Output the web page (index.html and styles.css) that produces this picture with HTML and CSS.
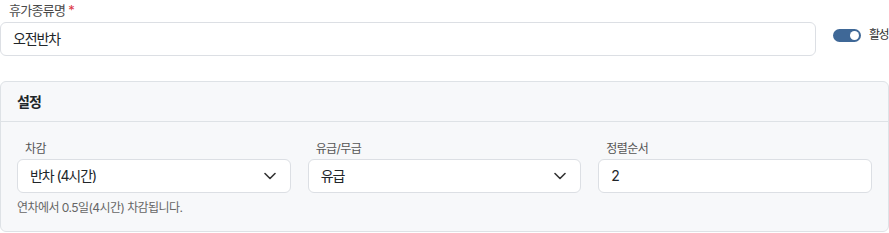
FILE: index.html
```html
<!DOCTYPE html>
<html lang="ko">
<head>
<meta charset="utf-8">
<link rel="stylesheet" href="styles.css">
</head>
<body>
<div class="page">
  <div class="name-row">
    <div class="name-field">
      <label class="label">휴가종류명 <span class="req">*</span></label>
      <div class="input">오전반차</div>
    </div>
    <div class="toggle-group">
      <span class="toggle"><span class="knob"></span></span>
      <span class="toggle-label">활성</span>
    </div>
  </div>

  <section class="card">
    <header class="card-header">설정</header>
    <div class="card-body">
      <div class="grid">
        <div class="field">
          <label class="label small">차감</label>
          <div class="input select"><span>반차 (4시간)</span>
            <svg class="chev" width="12" height="8" viewBox="0 0 12 8"><path d="M1 1.5 L6 6.5 L11 1.5" fill="none" stroke="#333" stroke-width="1.6" stroke-linecap="round" stroke-linejoin="round"/></svg>
          </div>
          <div class="help">연차에서 0.5일(4시간) 차감됩니다.</div>
        </div>
        <div class="field">
          <label class="label small">유급/무급</label>
          <div class="input select"><span>유급</span>
            <svg class="chev" width="12" height="8" viewBox="0 0 12 8"><path d="M1 1.5 L6 6.5 L11 1.5" fill="none" stroke="#333" stroke-width="1.6" stroke-linecap="round" stroke-linejoin="round"/></svg>
          </div>
        </div>
        <div class="field">
          <label class="label small">정렬순서</label>
          <div class="input">2</div>
        </div>
      </div>
    </div>
  </section>
</div>
</body>
</html>
```
FILE: styles.css
```css
* { box-sizing: border-box; }
html, body { margin: 0; padding: 0; background: #fff; }
body {
  font-family: "Inter", "Noto Sans CJK KR", sans-serif;
  color: #212529;
  width: 889px;
}
.name-row { display: flex; align-items: flex-start; }
.name-field { flex: 1; }
.label {
  display: block;
  font-size: 13px;
  line-height: 20px;
  color: #4a4a4a;
  padding-left: 9px;
  margin-bottom: 2px;
  letter-spacing: -0.7px;
}
.label.small {
  font-size: 12px;
  line-height: 18px;
  padding-left: 8px;
  margin-bottom: 1px;
  color: #555;
  letter-spacing: -0.6px;
}
.req { color: #dc3545; }
.input {
  height: 34px;
  border: 1px solid #dcdfe4;
  border-radius: 6px;
  background: #fff;
  font-size: 14px;
  line-height: 32px;
  padding: 0 12px;
  color: #212529;
  letter-spacing: -1.1px;
}
.select {
  display: flex;
  align-items: center;
  justify-content: space-between;
  padding-right: 14px;
}
.chev { display: block; }
.toggle-group {
  display: flex;
  align-items: center;
  margin-left: 17px;
  margin-top: 28px;
  gap: 8px;
}
.toggle {
  width: 28px;
  height: 13px;
  border-radius: 7px;
  background: #3f6897;
  position: relative;
  display: block;
}
.knob {
  position: absolute;
  right: 2px;
  top: 2px;
  width: 9px;
  height: 9px;
  border-radius: 50%;
  background: #fff;
}
.toggle-label {
  font-size: 12px;
  line-height: 14px;
  color: #333;
  letter-spacing: -1.5px;
  width: 20px;
  white-space: nowrap;
}
.card {
  margin-top: 25px;
  border: 1px solid #dee2e6;
  border-radius: 6px;
  background: #f7f8fa;
}
.card-header {
  height: 40px;
  padding: 0 16px;
  font-size: 14px;
  font-weight: 700;
  line-height: 39px;
  border-bottom: 1px solid #dee2e6;
  color: #212529;
  letter-spacing: -0.8px;
}
.card-body { padding: 18px 16px 14px 16px; }
.grid {
  display: grid;
  grid-template-columns: 1fr 1fr 1fr;
  gap: 17px;
}
.help {
  margin-top: 6px;
  font-size: 12px;
  line-height: 18px;
  color: #666;
  letter-spacing: -0.55px;
}
```
